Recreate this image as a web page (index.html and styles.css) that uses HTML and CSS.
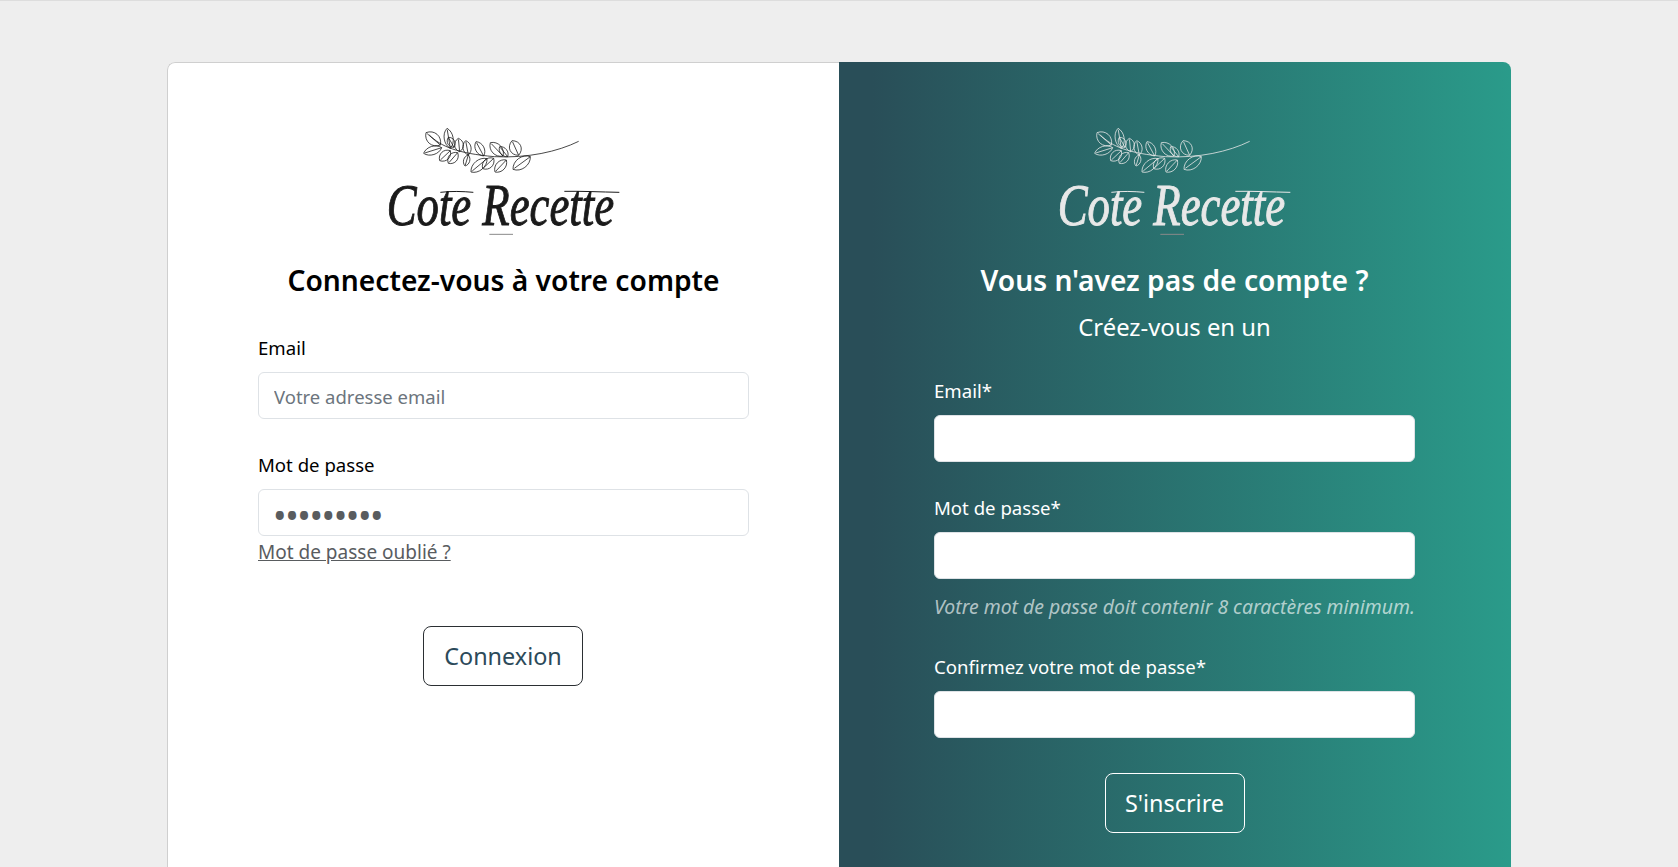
FILE: index.html
```html
<!DOCTYPE html>
<html lang="fr">
<head>
<meta charset="utf-8">
<title>Cote Recette</title>
<link rel="stylesheet" href="styles.css">
</head>
<body>
<svg class="defs" width="0" height="0" aria-hidden="true">
  <defs>
    <path id="leaf" d="M0 0C22-42 78-42 100 0C78 42 22 42 0 0ZM8 0L100 0"/>
    <symbol id="logo" viewBox="-21 0 900 420">
      <g class="sprig">
        <path d="M205 75C240 110 290 130 400 140C500 145 590 125 653 94"/>
        <use href="#leaf" transform="matrix(.43 .37 -.37 .43 195 68)"/>
        <use href="#leaf" transform="matrix(.10 .60 -.42 .07 258 55)"/>
        <use href="#leaf" transform="matrix(.17 .30 -.30 .17 262 82)"/>
        <use href="#leaf" transform="matrix(.54 -.17 .12 .38 188 130)"/>
        <use href="#leaf" transform="matrix(.32 -.30 .30 .32 236 152)"/>
        <use href="#leaf" transform="matrix(.28 -.32 .32 .28 262 160)"/>
        <use href="#leaf" transform="matrix(.04 .40 -.42 .04 292 85)"/>
        <use href="#leaf" transform="matrix(.08 .43 -.38 .07 314 92)"/>
        <use href="#leaf" transform="matrix(.10 -.33 .28 .09 312 168)"/>
        <use href="#leaf" transform="matrix(.23 .43 -.36 .19 345 95)"/>
        <use href="#leaf" transform="matrix(.48 -.40 .30 .36 330 186)"/>
        <use href="#leaf" transform="matrix(.33 -.31 .31 .33 365 176)"/>
        <use href="#leaf" transform="matrix(.38 .40 -.36 .34 388 98)"/>
        <use href="#leaf" transform="matrix(.24 .30 -.26 .20 416 110)"/>
        <use href="#leaf" transform="matrix(.34 -.36 .32 .30 402 186)"/>
        <use href="#leaf" transform="matrix(.20 .44 -.50 .23 453 92)"/>
        <use href="#leaf" transform="matrix(.52 -.38 .30 .42 456 178)"/>
      </g>
      <text class="wordmark" x="77" y="345" textLength="682" lengthAdjust="spacingAndGlyphs">Cote Recette</text>
      <path class="swash" d="M238 247C270 243 305 244 337 247M610 244C660 243 720 246 775 247"/>
      <path class="rule" d="M385 373H456"/>
    </symbol>
  </defs>
</svg>
<main class="card">
  <section class="panel panel-login">
    <svg class="logo"><use href="#logo"/></svg>
    <h1 class="title">Connectez-vous à votre compte</h1>
    <form class="form">
      <div class="field">
        <label class="label" for="login-email">Email</label>
        <input class="input" id="login-email" type="email" placeholder="Votre adresse email">
      </div>
      <div class="field field-last">
        <label class="label" for="login-password">Mot de passe</label>
        <input class="input input-dots" id="login-password" type="password" value="123456789">
        <a class="forgot" href="#">Mot de passe oublié ?</a>
      </div>
      <div class="actions actions-login">
        <button class="btn btn-dark" type="button">Connexion</button>
      </div>
    </form>
  </section>
  <section class="panel panel-signup">
    <svg class="logo"><use href="#logo"/></svg>
    <h2 class="title">Vous n'avez pas de compte ?</h2>
    <p class="subtitle">Créez-vous en un</p>
    <form class="form">
      <div class="field">
        <label class="label" for="signup-email">Email*</label>
        <input class="input" id="signup-email" type="email">
      </div>
      <div class="field field-hinted">
        <label class="label" for="signup-password">Mot de passe*</label>
        <input class="input" id="signup-password" type="password">
        <p class="hint">Votre mot de passe doit contenir 8 caractères minimum.</p>
      </div>
      <div class="field">
        <label class="label" for="signup-confirm">Confirmez votre mot de passe*</label>
        <input class="input" id="signup-confirm" type="password">
      </div>
      <div class="actions actions-signup">
        <button class="btn btn-light" type="button">S'inscrire</button>
      </div>
    </form>
  </section>
</main>
</body>
</html>
```
FILE: styles.css
```css
* { box-sizing: border-box; }

html, body { height: 100%; }

body {
  margin: 0;
  overflow: hidden;
  background: #eeeeee;
  border-top: 1px solid #dddddd;
  font-family: "Noto Sans", "Open Sans", sans-serif;
  font-size: 18.6px;
  line-height: 27px;
  color: #000;
}

.defs { display: block; height: 0; }

.card {
  display: flex;
  width: 1344px;
  height: 840px;
  margin: 61px auto 0;
  border-radius: 8px;
  overflow: hidden;
}

.panel { flex: 1 1 50%; }

.panel-login {
  background: #fff;
  border: 1px solid #cfcfcf;
  border-right: 0;
  border-radius: 8px 0 0 8px;
  padding: 47px 90px 0;
}

.panel-signup {
  background: linear-gradient(90deg, #294e58 5%, #2a9b8a 100%);
  color: #fff;
  padding: 48px 96px 0 95px;
}

.logo { display: block; width: 300px; height: 140px; margin: 0 auto; }
.panel-login .logo { color: #1a1a1a; }
.panel-signup .logo { color: #e8e8e8; }

.sprig, .sprig use { fill: none; stroke: currentColor; stroke-width: .8px; }
.sprig path, #leaf { vector-effect: non-scaling-stroke; }

.wordmark {
  font-family: "Liberation Serif", serif;
  font-style: italic;
  font-size: 180px;
  fill: currentColor;
  stroke: currentColor;
  stroke-width: 3px;
}

.swash { fill: none; stroke: currentColor; stroke-width: 3px; }
.rule { fill: none; stroke: #8a8a8a; stroke-width: 3px; }

.title {
  margin: 13px 0 0;
  font-size: 28.2px;
  line-height: 34px;
  font-weight: 600;
  text-align: center;
}

.subtitle {
  margin: 14px 0 0;
  font-size: 23.8px;
  line-height: 33px;
  text-align: center;
}

.panel-login .form { margin-top: 37px; }
.panel-signup .form { margin-top: 33px; }

.field { margin-bottom: 32px; }
.field-last { margin-bottom: 0; }
.field-hinted { margin-bottom: 0; }

.label { display: block; margin-bottom: 11px; }

.input {
  display: block;
  width: 100%;
  height: 47px;
  padding: 1px 15px 0;
  border: 1px solid #dee2e6;
  border-radius: 6px;
  background: #fff;
  font: inherit;
  font-size: 18.5px;
  color: #595c5f;
  outline: none;
}

.input::placeholder { color: #6c757d; opacity: 1; }
.input-dots { padding: 5px 14px 0; font-size: 36px; letter-spacing: -1.4px; }

.forgot {
  display: block;
  width: max-content;
  margin-top: 3px;
  font-size: 19px;
  color: #595c5f;
}

.hint {
  margin: 14px 0 33px;
  font-size: 19.4px;
  font-style: italic;
  color: rgba(255, 255, 255, .65);
}

.actions { display: flex; justify-content: center; }
.actions-login { margin-top: 60px; }
.actions-signup { margin-top: 35px; }

.btn {
  height: 60px;
  border-radius: 8px;
  background: transparent;
  font-family: inherit;
  font-size: 23.4px;
}

.btn-dark { width: 160px; margin-right: 1px; border: 1px solid #2b2f33; color: #2c4a5a; }
.btn-light { width: 140px; border: 1px solid #fff; color: #fff; }
```
